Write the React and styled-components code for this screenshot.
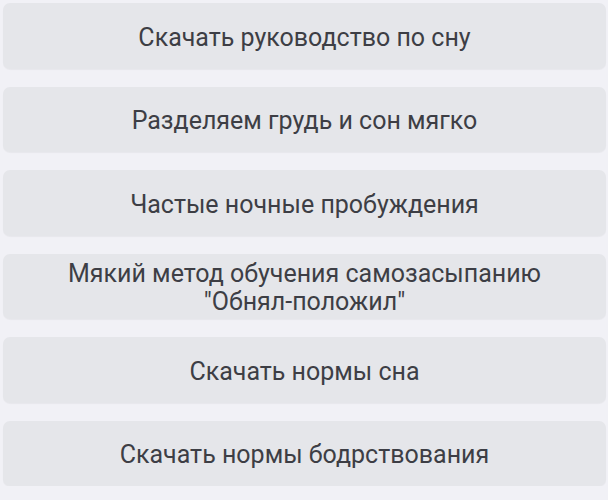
import React from "react";
import styled, { createGlobalStyle } from "styled-components";

const Global = createGlobalStyle`
  html, body {
    margin: 0;
    padding: 0;
    background: #f1f1f6;
  }
  body {
    font-family: Roboto, "Noto Sans", sans-serif;
  }
`;

const Menu = styled.div`
  display: flex;
  flex-direction: column;
  gap: 18px;
  padding: 3px 2px 0 3px;
`;

const MenuButton = styled.button`
  display: flex;
  align-items: center;
  justify-content: center;
  height: 65.5px;
  margin: 0;
  padding: 4px 16px 0;
  border: none;
  border-radius: 7px;
  background: #e5e6ea;
  box-shadow: 0 1px 1px rgba(0, 0, 0, 0.04);
  color: #3d3e45;
  font-family: Roboto, "Noto Sans", sans-serif;
  font-size: 25px;
  line-height: 28px;
  text-align: center;
  cursor: pointer;
`;

const items = [
  ["Скачать руководство по сну"],
  ["Разделяем грудь и сон мягко"],
  ["Частые ночные пробуждения"],
  ["Мякий метод обучения самозасыпанию", '"Обнял-положил"'],
  ["Скачать нормы сна"],
  ["Скачать нормы бодрствования"],
];

export default function App() {
  return (
    <>
      <Global />
      <Menu>
        {items.map((lines, i) => (
          <MenuButton key={i}>
            <span>
              {lines.map((l, j) => (
                <React.Fragment key={j}>
                  {j > 0 && <br />}
                  {l}
                </React.Fragment>
              ))}
            </span>
          </MenuButton>
        ))}
      </Menu>
    </>
  );
}
